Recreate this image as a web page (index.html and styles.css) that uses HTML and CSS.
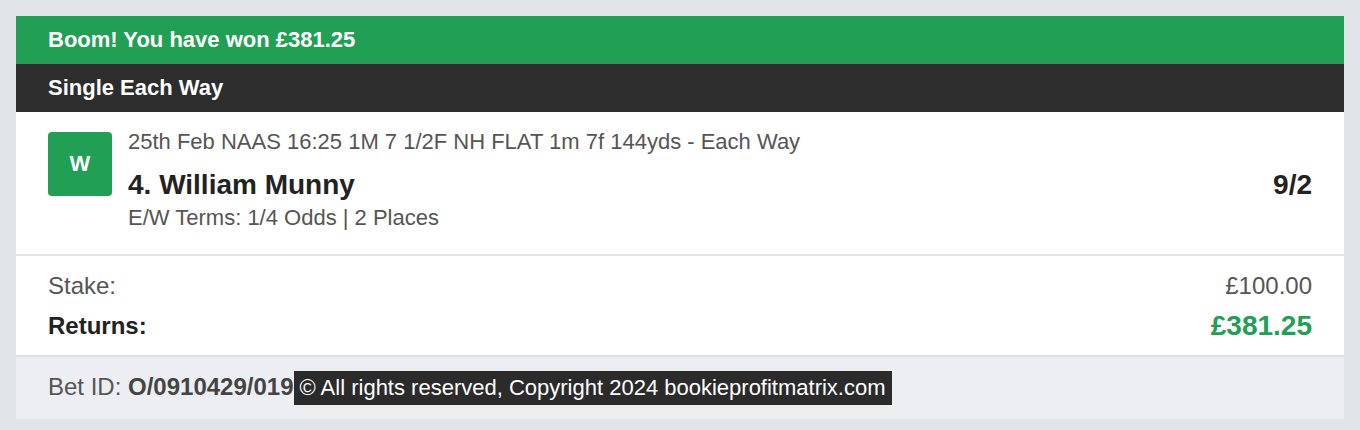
FILE: index.html
```html
<!DOCTYPE html>
<html lang="en">
<head>
  <meta charset="UTF-8" />
  <meta name="viewport" content="width=device-width, initial-scale=1.0"/>
  <title>Bet Receipt</title>
  <link rel="stylesheet" href="styles.css">
</head>
<body>
  <div class="receipt">
    <div class="win-banner">Boom! You have won £381.25</div>
    <div class="bet-type">Single Each Way</div>

    <div class="selection">
      <div class="result-badge">W</div>
      <div class="selection-info">
        <div class="event">25th Feb NAAS 16:25 1M 7 1/2F NH FLAT 1m 7f 144yds - Each Way</div>
        <div class="runner-row">
          <span class="runner">4. William Munny</span>
          <span class="odds">9/2</span>
        </div>
        <div class="terms">E/W Terms: 1/4 Odds | 2 Places</div>
      </div>
    </div>

    <div class="summary">
      <div class="summary-row">
        <span class="label">Stake:</span>
        <span class="amount">£100.00</span>
      </div>
      <div class="summary-row returns">
        <span class="label">Returns:</span>
        <span class="amount">£381.25</span>
      </div>
    </div>

    <div class="footer">
      Bet ID: <strong>O/0910429/019</strong><span class="copyright">© All rights reserved, Copyright 2024 bookieprofitmatrix.com</span>
    </div>
  </div>
</body>
</html>
```

FILE: styles.css
```css
body {
  margin: 0;
  padding: 16px;
  background-color: #e1e4e8;
  font-family: "Liberation Sans", Arial, sans-serif;
  color: #222;
}

.receipt {
  background-color: #fff;
}

.win-banner,
.bet-type {
  height: 48px;
  line-height: 48px;
  padding: 0 32px;
  color: #fff;
  font-size: 22px;
  font-weight: bold;
}

.win-banner {
  background-color: #21a055;
}

.bet-type {
  background-color: #2d2d2d;
}

.selection {
  display: flex;
  gap: 16px;
  padding: 18px 32px 22px;
  border-bottom: 2px solid #e6e6e6;
}

.result-badge {
  flex: 0 0 64px;
  height: 64px;
  margin-top: 2px;
  border-radius: 4px;
  background-color: #21a055;
  color: #fff;
  font-size: 22px;
  font-weight: bold;
  line-height: 64px;
  text-align: center;
}

.selection-info {
  flex: 1;
}

.event {
  font-size: 22px;
  line-height: 24px;
  color: #555;
}

.runner-row {
  display: flex;
  justify-content: space-between;
  margin-top: 14px;
  line-height: 34px;
}

.runner {
  font-size: 28px;
  font-weight: bold;
}

.odds {
  font-size: 28px;
  font-weight: bold;
}

.terms {
  margin-top: 2px;
  font-size: 22px;
  line-height: 28px;
  color: #555;
}

.summary {
  padding: 14px 32px 13px;
  border-bottom: 2px solid #dcdfe3;
}

.summary-row {
  display: flex;
  justify-content: space-between;
  line-height: 32px;
  font-size: 24px;
  color: #555;
}

.summary-row.returns {
  margin-top: 8px;
  color: #222;
  font-weight: bold;
}

.summary-row.returns .amount {
  font-size: 28px;
  color: #21a055;
}

.footer {
  padding: 13px 32px 14px;
  background-color: #eceef1;
  font-size: 24px;
  line-height: 34px;
  color: #555;
}

.footer strong {
  color: #444;
}

.copyright {
  display: inline-block;
  padding: 0 6px;
  background-color: #2b2b2b;
  color: #fff;
  font-size: 22px;
  line-height: 34px;
}
```
